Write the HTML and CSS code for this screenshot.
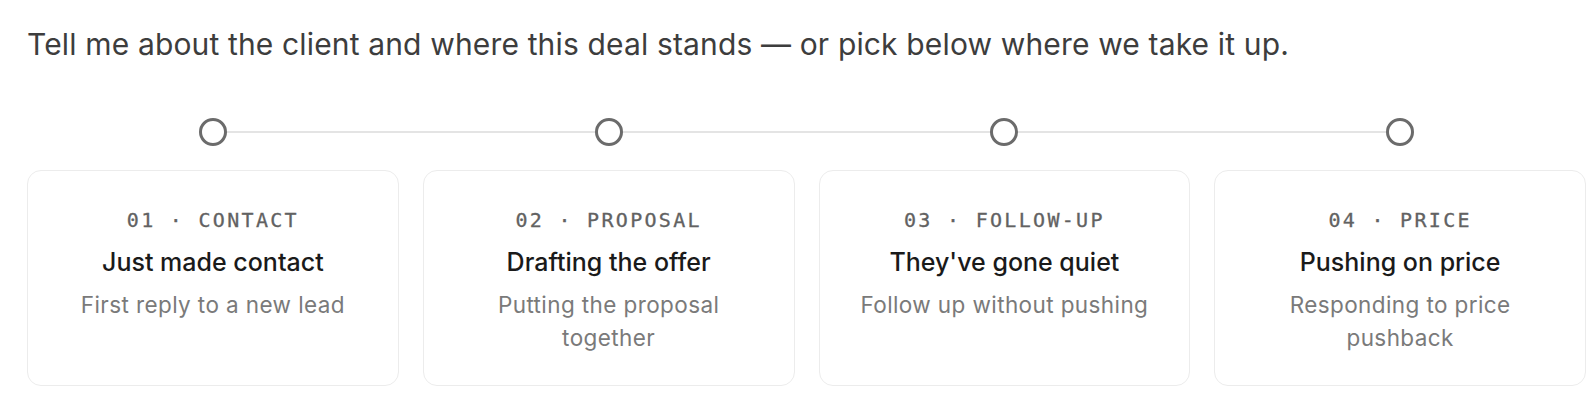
FILE: index.html
```html
<!DOCTYPE html>
<html lang="en">
  <head>
    <meta charset="UTF-8" />
    <meta name="viewport" content="width=device-width, initial-scale=1.0" />
    <title>Deal stage</title>
    <link rel="stylesheet" href="styles.css">
  </head>
  <body>
    <div class="page">
      <p class="intro">Tell me about the client and where this deal stands — or pick below where we take it up.</p>

      <div class="stepper">
        <div class="track">
          <div class="dot-cell"><span class="dot"></span></div>
          <div class="dot-cell"><span class="dot"></span></div>
          <div class="dot-cell"><span class="dot"></span></div>
          <div class="dot-cell"><span class="dot"></span></div>
        </div>

        <div class="stages">
          <div class="stage">
            <div class="stage-label">01 · CONTACT</div>
            <h3>Just made contact</h3>
            <p>First reply to a new lead</p>
          </div>
          <div class="stage">
            <div class="stage-label">02 · PROPOSAL</div>
            <h3>Drafting the offer</h3>
            <p>Putting the proposal together</p>
          </div>
          <div class="stage">
            <div class="stage-label">03 · FOLLOW-UP</div>
            <h3>They've gone quiet</h3>
            <p>Follow up without pushing</p>
          </div>
          <div class="stage">
            <div class="stage-label">04 · PRICE</div>
            <h3>Pushing on price</h3>
            <p>Responding to price pushback</p>
          </div>
        </div>
      </div>
    </div>
  </body>
</html>
```

FILE: styles.css
```css
* {
  margin: 0;
  padding: 0;
  box-sizing: border-box;
}
body {
  font-family: Inter, "Noto Sans", sans-serif;
  background: #fff;
  color: #1a1a1a;
}
.page {
  padding: 24px 8px 0 27px;
}
.intro {
  font-size: 30px;
  line-height: 40px;
  color: #3d3d3d;
  letter-spacing: 0.15px;
}
.stepper {
  margin-top: 54px;
}
.track {
  position: relative;
  display: grid;
  grid-template-columns: repeat(4, 1fr);
  column-gap: 24px;
  height: 28px;
}
/* line between the first and the last dot */
.track::before {
  content: "";
  position: absolute;
  top: 13px;
  height: 2px;
  left: calc((100% - 72px) / 8);
  right: calc((100% - 72px) / 8);
  background: #e4e4e4;
}
.dot-cell {
  display: flex;
  justify-content: center;
}
.dot {
  position: relative;
  width: 28px;
  height: 28px;
  border: 3px solid #6b6b6b;
  border-radius: 50%;
  background: #fff;
}
.stages {
  display: grid;
  grid-template-columns: repeat(4, 1fr);
  column-gap: 24px;
  margin-top: 24px;
}
.stage {
  border: 1px solid #ececec;
  border-radius: 14px;
  padding: 37px 35px 31px;
  text-align: center;
  height: 216px;
}
.stage-label {
  font-family: "DejaVu Sans Mono", monospace;
  font-size: 20px;
  line-height: 24px;
  letter-spacing: 2.3px;
  color: #626262;
  -webkit-text-stroke: 0.3px #626262;
}
.stage h3 {
  margin-top: 14px;
  font-size: 25px;
  line-height: 32px;
  font-weight: 500;
  color: #1a1a1a;
}
.stage p {
  margin-top: 10px;
  font-size: 22.5px;
  line-height: 33px;
  letter-spacing: 0.4px;
  color: #7a7a7a;
}
```
